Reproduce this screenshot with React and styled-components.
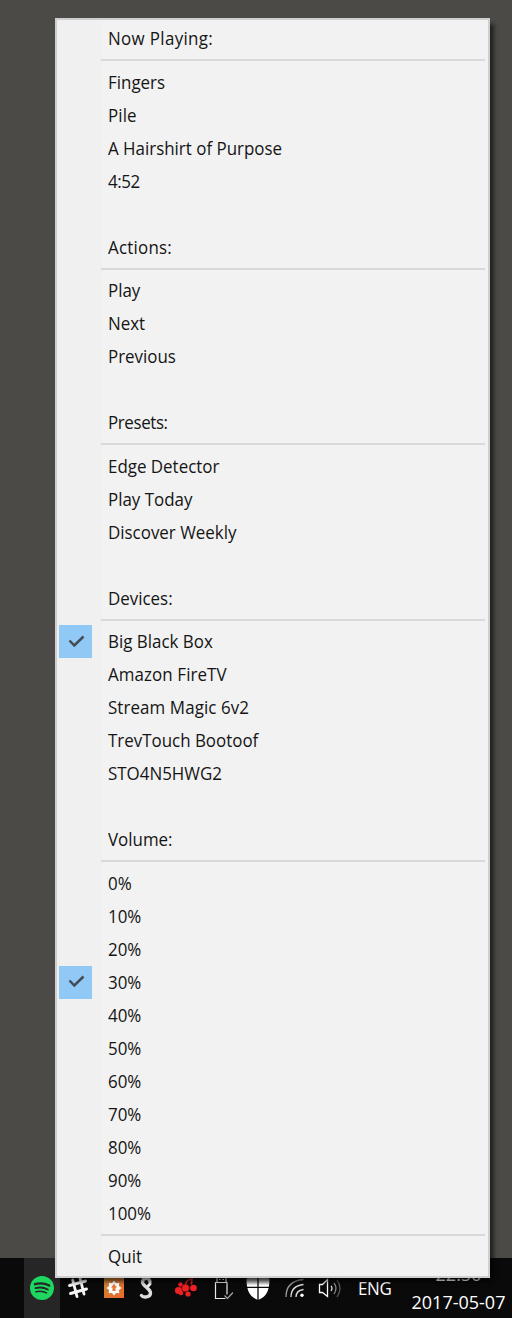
import React from "react";
import styled, { createGlobalStyle } from "styled-components";

const GlobalStyle = createGlobalStyle`
  * { box-sizing: border-box; }
  body { margin: 0; background: #4b4a47; font-family: "Open Sans", "Noto Sans", sans-serif; }
`;

const Desktop = styled.div`
  position: relative;
  display: flex;
  flex-direction: column;
  justify-content: flex-end;
  width: 512px;
  height: 1318px;
  overflow: hidden;
  background: #4b4a47;
`;

const Menu = styled.div`
  position: absolute;
  left: 55px;
  top: 18px;
  width: 435px;
  height: 1260px;
  padding: 2.2px 2px;
  background: linear-gradient(90deg, #f0f0f0 45px, #f2f2f2 45px);
  border: 2px solid #cfcfcf;
  box-shadow: 5px 5px 4px -1px rgba(0, 0, 0, 0.55);
`;

const Item = styled.div`
  display: grid;
  grid-template-columns: 33px 1fr;
  column-gap: 15.5px;
  align-items: center;
  height: 33px;
  color: #151515;
  font-size: 18px;
  line-height: 32px;
  white-space: pre;
`;

const Label = styled.span`
  height: 33px;
  letter-spacing: ${(p) => p.$spacing}px;
  transform: scaleX(0.94);
  transform-origin: left;
`;

const CheckBox = styled.span`
  display: grid;
  place-items: center;
  width: 33px;
  height: 33px;
  padding: 0 0 1px 1px;
  background: ${(p) => (p.$on ? "#90c8f6" : "transparent")};
`;

const Separator = styled.div`
  height: 10.5px;
  padding: 4.3px 1px 0 42px;
  &::after {
    content: "";
    display: block;
    height: 2px;
    background: #d9d9d9;
  }
`;

const Taskbar = styled.div`
  display: flex;
  height: 60px;
  padding-left: 24px;
  background: #0a0a0a;
`;

const TrayCell = styled.div`
  display: grid;
  place-items: center;
  width: 36px;
  height: 60px;
  background: ${(p) => (p.$active ? "#262626" : "transparent")};
`;

const Language = styled.div`
  width: 51px;
  padding-left: 10px;
  color: #fff;
  font-size: 18px;
  line-height: 61px;
  transform: scaleX(0.94);
  transform-origin: 10px 50%;
  letter-spacing: -0.3px;
`;

const Clock = styled.div`
  flex: 1;
  padding: 2px 0 0 6px;
  color: #fff;
  font-size: 18px;
  line-height: 28px;
  text-align: center;
  white-space: nowrap;
`;

const groups = [
  [["Now Playing:", 0.36]],
  [["Fingers", 0], ["Pile", 0.1], ["A Hairshirt of Purpose", 0], ["4:52", -0.5], ["", 0], ["Actions:", 0.25]],
  [["Play", 0], ["Next", 0], ["Previous", 0], ["", 0], ["Presets:", -0.4]],
  [["Edge Detector", 0], ["Play Today", 0], ["Discover Weekly", 0], ["", 0], ["Devices:", 0]],
  [["Big Black Box", 0, true], ["Amazon FireTV", 0.1], ["Stream Magic 6v2", 0.1], ["TrevTouch Bootoof", 0], ["STO4N5HWG2", 0], ["", 0], ["Volume:", 0]],
  [["0%", 0.2], ["10%", 0], ["20%", 0], ["30%", 0, true], ["40%", 0], ["50%", 0], ["60%", 0], ["70%", 0], ["80%", 0], ["90%", 0], ["100%", 0]],
  [["Quit", 0.1]],
];

const Check = () => (
  <svg width="17" height="13" viewBox="0 0 17 13" fill="none" stroke="#434c55" strokeWidth="2.5">
    <path d="M1.500 5.500 6.300 10.500 15.500 1.500" />
  </svg>
);

const Spotify = () => (
  <svg width="24" height="24" viewBox="0 0 24 24">
    <circle cx="12" cy="12" r="12" fill="#1ed760" />
    <g fill="none" stroke="#262626" strokeLinecap="round">
      <path d="M5 8.2C9.500 6.900 15 7.300 19.200 9.600" strokeWidth="2.300" />
      <path d="M5.500 12.100C9.500 11 14 11.400 17.800 13.500" strokeWidth="1.900" />
      <path d="M6 15.700C9.500 14.800 13.300 15.100 16.500 16.900" strokeWidth="1.500" />
    </g>
  </svg>
);

const Slack = () => (
  <svg width="24" height="24" viewBox="0 0 24 24" fill="none" stroke="#f4f4f4" strokeWidth="2.900" strokeLinecap="round">
    <path d="M6.700 4 11 20.500M14 2 18 18M3.500 9.500 19.500 5M4.500 17.500 20.500 13" />
  </svg>
);

const gear = Array.from({ length: 16 }, (_, i) => {
  const a = (i * Math.PI) / 8;
  const r = i % 2 ? 5.3 : 7.6;
  return `${(10 + r * Math.sin(a)).toFixed(2)},${(10 - r * Math.cos(a)).toFixed(2)}`;
}).join(" ");

const GearApp = () => (
  <svg width="20" height="20" viewBox="0 0 20 20">
    <defs>
      <linearGradient id="gear-bg" x1="0" y1="0" x2="1" y2="1">
        <stop offset="0" stopColor="#c98335" />
        <stop offset="1" stopColor="#ed6a2c" />
      </linearGradient>
    </defs>
    <path d="M0 0H20V20H0Z" fill="url(#gear-bg)" />
    <polygon points={gear} fill="#fff" />
    <path d="M10 6 13.200 9.500H11.500V13H8.500V9.500H6.800Z" fill="#e87730" />
  </svg>
);

const Knot = () => (
  <svg width="28" height="24" viewBox="0 0 28 24" fill="none" strokeLinecap="round" strokeLinejoin="round">
    <path d="M14 6C14 1 6.500 1 6.500 6C6.500 10 14.500 12.500 14.500 17C14.500 21.500 7 22 5.500 19.500" stroke="#dedede" strokeWidth="3.400" />
    <path d="M14 8 12.500 9.500" stroke="#f4f4f4" strokeWidth="3" />
  </svg>
);

const Berries = () => (
  <svg width="24" height="24" viewBox="0 0 24 24" fill="#ee2024">
    <circle cx="4.500" cy="14.500" r="3.600" /><circle cx="6.500" cy="8.500" r="2.300" />
    <circle cx="19.500" cy="12" r="3.300" />
    <circle cx="14" cy="18" r="2.600" /><circle cx="7" cy="17" r="2.300" />
    <circle cx="11.500" cy="12" r="3.900" stroke="#6d0d10" strokeWidth=".9" />
    <path d="M11.500 8Q13 3.500 18 3L17.500 7.500 16.500 6.500" fill="none" stroke="#d81d21" strokeWidth="1.600" />
  </svg>
);

const Usb = () => (
  <svg width="22" height="26" viewBox="-1.500 0 22 26" fill="none" stroke="#e8e8e8" strokeWidth="1.200">
    <path d="M4.500 7V1.500H13.500V7M14.500 19.500V7.500H3V23.500H13M6.500 4.500H8M10 4.500H11.500" />
    <path d="M12 20.500 15 23.500 20.500 17.500" stroke="#aaa" />
  </svg>
);

const Shield = () => (
  <svg width="24" height="26" viewBox="0 0 24 26">
    <defs>
      <linearGradient id="shield" x1="0" y1="0" x2="0" y2="1">
        <stop offset=".1" stopColor="#777" /><stop offset=".42" stopColor="#fff" />
      </linearGradient>
    </defs>
    <path d="M12 0Q17 3 23.500 3.500C23.500 14 21.500 21.500 12 25C2.500 21.500.5 14 .5 3.500Q7 3 12 0Z" fill="url(#shield)" />
    <path d="M12 0V26M0 12.300H24" stroke="#0a0a0a" strokeWidth="1.300" />
  </svg>
);

const Wifi = () => (
  <svg width="22" height="20" viewBox="-2 0 22 20" fill="none" strokeWidth="1.300">
    <path d="M1 19Q1 3 18.500 1.500" stroke="#999" />
    <path d="M6 19Q6 8 18.500 6.500M11 19Q11 12.500 18.500 11.500" stroke="#ddd" />
    <circle cx="17" cy="17.300" r="1.700" fill="#fff" />
  </svg>
);

const Speaker = () => (
  <svg width="24" height="20" viewBox="0 0 24 20" fill="none" strokeWidth="1.300">
    <path d="M1.500 6.500H4.500L9.500 1.500V18.500L4.500 14.500H1.500Z" stroke="#fff" />
    <path d="M13 8Q15 10 13 13" stroke="#ddd" />
    <path d="M16 5Q20 10 16 16" stroke="#888" />
    <path d="M19 2Q25 10 19 19" stroke="#555" />
  </svg>
);

const tray = [Spotify, Slack, GearApp, Knot, Berries, Usb, Shield, Wifi, Speaker];

export default function App() {
  return (
    <Desktop>
      <GlobalStyle />
      <Taskbar>
        {tray.map((Icon, i) => (
          <TrayCell key={i} $active={i === 0}><Icon /></TrayCell>
        ))}
        <Language>ENG</Language>
        <Clock>22:50<br />2017-05-07</Clock>
      </Taskbar>
      <Menu>
        {groups.map((items, g) => (
          <React.Fragment key={g}>
            {g > 0 && <Separator />}
            {items.map(([text, spacing, on], i) => (
              <Item key={i}>
                <CheckBox $on={on}>{on && <Check />}</CheckBox>
                <Label $spacing={spacing}>{text}</Label>
              </Item>
            ))}
          </React.Fragment>
        ))}
      </Menu>
    </Desktop>
  );
}
